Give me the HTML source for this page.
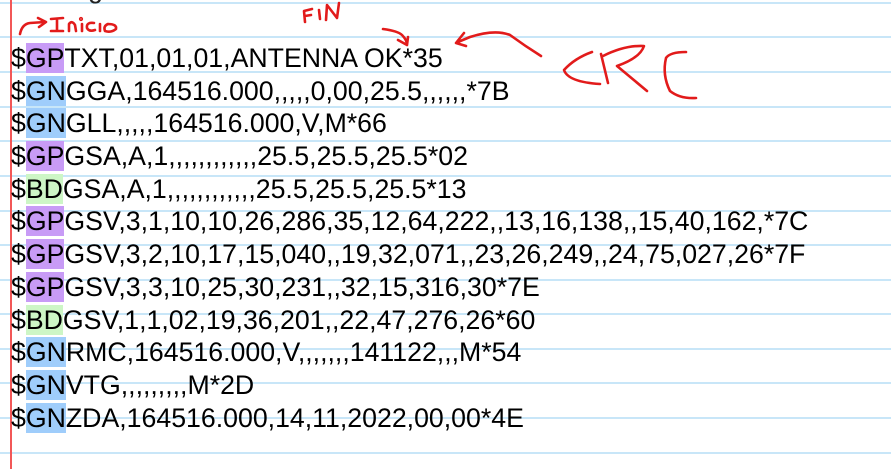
<!DOCTYPE html>
<html><head><meta charset="utf-8"><style>
html,body{margin:0;padding:0;}
body{width:891px;height:469px;overflow:hidden;position:relative;background:#fff;font-family:"Liberation Sans",Arial,sans-serif;}
.hl{position:absolute;left:0;width:891px;height:2px;background:#c8e6f8;}
.margin{position:absolute;left:10px;top:0;width:2px;height:469px;background:#f25757;}
.row{position:absolute;left:11px;font-size:26.7px;line-height:30px;height:30px;white-space:nowrap;color:#000;}
.gp{background:#c89bf6;}
.gn{background:#9fcdfb;}
.bd{background:#cdf6c6;}
svg{position:absolute;left:0;top:0;}
</style></head><body>
<div class="hl" style="top:2px"></div>
<div class="hl" style="top:36px"></div>
<div class="hl" style="top:71px"></div>
<div class="hl" style="top:106px"></div>
<div class="hl" style="top:140px"></div>
<div class="hl" style="top:175px"></div>
<div class="hl" style="top:210px"></div>
<div class="hl" style="top:244px"></div>
<div class="hl" style="top:279px"></div>
<div class="hl" style="top:313px"></div>
<div class="hl" style="top:348px"></div>
<div class="hl" style="top:382px"></div>
<div class="hl" style="top:417px"></div>
<div class="hl" style="top:452px"></div>
<div class="margin"></div>
<div class="row" style="top:-26px;color:#222">Con algo de cobertura</div>
<div class="row" style="top:43px">$<span class="gp">GP</span>TXT,01,01,01,ANTENNA OK*35</div>
<div class="row" style="top:76px">$<span class="gn">GN</span>GGA,164516.000,,,,,0,00,25.5,,,,,,*7B</div>
<div class="row" style="top:108px">$<span class="gn">GN</span>GLL,,,,,164516.000,V,M*66</div>
<div class="row" style="top:141px">$<span class="gp">GP</span>GSA,A,1,,,,,,,,,,,,25.5,25.5,25.5*02</div>
<div class="row" style="top:174px">$<span class="bd">BD</span>GSA,A,1,,,,,,,,,,,,25.5,25.5,25.5*13</div>
<div class="row" style="top:206px">$<span class="gp">GP</span>GSV,3,1,10,10,26,286,35,12,64,222,,13,16,138,,15,40,162,*7C</div>
<div class="row" style="top:239px">$<span class="gp">GP</span>GSV,3,2,10,17,15,040,,19,32,071,,23,26,249,,24,75,027,26*7F</div>
<div class="row" style="top:272px">$<span class="gp">GP</span>GSV,3,3,10,25,30,231,,32,15,316,30*7E</div>
<div class="row" style="top:305px">$<span class="bd">BD</span>GSV,1,1,02,19,36,201,,22,47,276,26*60</div>
<div class="row" style="top:337px">$<span class="gn">GN</span>RMC,164516.000,V,,,,,,,141122,,,M*54</div>
<div class="row" style="top:370px">$<span class="gn">GN</span>VTG,,,,,,,,,M*2D</div>
<div class="row" style="top:403px">$<span class="gn">GN</span>ZDA,164516.000,14,11,2022,00,00*4E</div>
<svg width="891" height="469" viewBox="0 0 891 469" fill="none" stroke="#e21b1b" stroke-width="2.6" stroke-linecap="round" stroke-linejoin="round">
<path d="M20 34 Q22 24 30 23 L45 22 M38 18 L46 22 L39 27"/>
<path d="M51 19 L63 18 M57 19 L57 31 M51 31 L63 31"/>
<path d="M69 31 L69 24 Q72 20 75 25 L76 31"/>
<circle cx="81" cy="19" r="0.8"/>
<path d="M82 24 L82 31"/>
<path d="M94 23 Q86 22 87 28 Q89 32 95 30"/>
<path d="M100 24 L100 31"/>
<path d="M108 24 Q103 26 105 31 Q111 33 116 29 Q117 24 108 24"/>
<path d="M305 22 L304 11 L312 9 M305 16 L311 15"/>
<path d="M319 10 L320 19"/>
<path d="M326 20 L327 5 L337 18 L339 3"/>
<path d="M383 29 Q398 31 402 35 Q407 40 407 45 M398 40 L407 45 L408 37"/>
<path d="M541 56 Q525 46 510 35 Q495 29 470 37 L458 42 M464 33 L456 43 L466 46"/>
<path d="M592 52 Q575 58 564 70 Q568 82 600 84"/>
<path d="M601 54 L608 83 M603 56 Q625 45 644 46 Q640 58 617 66 L647 91"/>
<path d="M686 52 Q670 52 666 58 Q662 75 670 91 Q680 99 696 98"/>
</svg>
</body></html>
